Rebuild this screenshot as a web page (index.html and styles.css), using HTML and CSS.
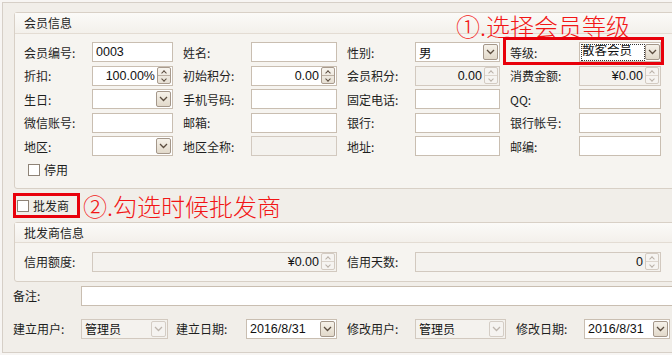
FILE: index.html
```html
<!DOCTYPE html>
<html lang="zh-CN">
<head>
    <meta charset="UTF-8">
    <title>会员资料</title>
    <link rel="stylesheet" href="styles.css">
</head>
<body>
    <div class="window">
        <!-- 会员信息 -->
        <div class="group member">
            <div class="group-head">会员信息</div>
            <div class="member-grid">
                <label class="lbl">会员编号:</label>
                <div class="field"><span class="val">0003</span></div>
                <label class="lbl">姓名:</label>
                <div class="field"></div>
                <label class="lbl">性别:</label>
                <div class="field combo"><span class="val">男</span><span class="drop"><svg width="9" height="6"><polyline points="1,1 4.5,4.5 8,1"/></svg></span></div>
                <label class="lbl">等级:</label>
                <div class="field combo"><span class="val focus">散客会员</span><span class="drop"><svg width="9" height="6"><polyline points="1,1 4.5,4.5 8,1"/></svg></span></div>

                <label class="lbl">折扣:</label>
                <div class="field num"><span class="val">100.00%</span><span class="spin"><i class="up"></i><i class="down"></i></span></div>
                <label class="lbl">初始积分:</label>
                <div class="field num"><span class="val">0.00</span><span class="spin"><i class="up"></i><i class="down"></i></span></div>
                <label class="lbl">会员积分:</label>
                <div class="field num off"><span class="val">0.00</span><span class="spin"><i class="up"></i><i class="down"></i></span></div>
                <label class="lbl">消费金额:</label>
                <div class="field num off"><span class="val">¥0.00</span><span class="spin"><i class="up"></i><i class="down"></i></span></div>

                <label class="lbl">生日:</label>
                <div class="field combo"><span class="val"></span><span class="drop"><svg width="9" height="6"><polyline points="1,1 4.5,4.5 8,1"/></svg></span></div>
                <label class="lbl">手机号码:</label>
                <div class="field"></div>
                <label class="lbl">固定电话:</label>
                <div class="field"></div>
                <label class="lbl">QQ:</label>
                <div class="field"></div>

                <label class="lbl">微信账号:</label>
                <div class="field"></div>
                <label class="lbl">邮箱:</label>
                <div class="field"></div>
                <label class="lbl">银行:</label>
                <div class="field"></div>
                <label class="lbl">银行帐号:</label>
                <div class="field"></div>

                <label class="lbl">地区:</label>
                <div class="field combo"><span class="val"></span><span class="drop"><svg width="9" height="6"><polyline points="1,1 4.5,4.5 8,1"/></svg></span></div>
                <label class="lbl">地区全称:</label>
                <div class="field off"></div>
                <label class="lbl">地址:</label>
                <div class="field"></div>
                <label class="lbl">邮编:</label>
                <div class="field"></div>

                <label class="check stop"><i class="box"></i>停用</label>
            </div>
            <!-- 标注 -->
            <div class="hint hint-grade">①.选择会员等级</div>
            <div class="mark mark-grade"></div>
        </div>

        <div class="dealer-row">
            <label class="check dealer-check"><i class="box"></i>批发商</label>
            <span class="hint">②.勾选时候批发商</span>
        </div>

        <!-- 批发商信息 -->
        <div class="group dealer">
            <div class="group-head">批发商信息</div>
            <div class="dealer-grid">
                <label class="lbl">信用额度:</label>
                <div class="field num off"><span class="val">¥0.00</span><span class="spin"><i class="up"></i><i class="down"></i></span></div>
                <label class="lbl">信用天数:</label>
                <div class="field num off"><span class="val">0</span><span class="spin"><i class="up"></i><i class="down"></i></span></div>
            </div>
        </div>

        <div class="remark-row">
            <label class="lbl">备注:</label>
            <div class="field"></div>
        </div>

        <div class="audit-row">
            <label class="lbl">建立用户:</label>
            <div class="field combo off"><span class="val">管理员</span><span class="drop"><svg width="9" height="6"><polyline points="1,1 4.5,4.5 8,1"/></svg></span></div>
            <label class="lbl">建立日期:</label>
            <div class="field combo"><span class="val">2016/8/31</span><span class="drop"><svg width="9" height="6"><polyline points="1,1 4.5,4.5 8,1"/></svg></span></div>
            <label class="lbl">修改用户:</label>
            <div class="field combo off"><span class="val">管理员</span><span class="drop"><svg width="9" height="6"><polyline points="1,1 4.5,4.5 8,1"/></svg></span></div>
            <label class="lbl">修改日期:</label>
            <div class="field combo"><span class="val">2016/8/31</span><span class="drop"><svg width="9" height="6"><polyline points="1,1 4.5,4.5 8,1"/></svg></span></div>
        </div>
    </div>
</body>
</html>
```

FILE: styles.css
```css
/* 基础 */
* {
    margin: 0;
    padding: 0;
    box-sizing: border-box;
}

body {
    width: 672px;
    height: 355px;
    overflow: hidden;
    background: #f7f5f3;
    padding: 2px 0 0 2px;
    font-family: "Noto Sans CJK SC", "Liberation Sans", sans-serif;
    font-size: 12px;
    color: #1e1e1e;
}

/* 窗体 */
.window {
    height: 351px;
    margin-right: -4px;
    border: 1px solid #d6cfc7;
    border-right: none;
    background: #f1eee9;
    padding: 9px 0 0 11px;
}

/* 分组框 */
.group {
    position: relative;
    margin-right: -6px;
    border: 1px solid #d8d0c6;
    border-radius: 3px;
    background: #f6f4f0;
}

.group-head {
    height: 21px;
    line-height: 20px;
    padding-left: 9px;
    border-bottom: 1px solid #e3dcd3;
    background: linear-gradient(#fbfaf8, #f3f0eb);
}

.dealer .group-head {
    height: 20px;
    line-height: 19px;
}

.lbl {
    display: flex;
    align-items: center;
    white-space: nowrap;
}

/* 会员信息网格 */
.member-grid {
    display: grid;
    grid-template-columns: 68px 81px 78px 86px 78px 85px 79px 82px;
    grid-auto-rows: 20px;
    row-gap: 3.5px;
    padding: 8px 0 8px 9px;
}

.member-grid .lbl:nth-child(8n+3),
.member-grid .lbl:nth-child(8n+5),
.member-grid .lbl:nth-child(8n+7) {
    padding-left: 10px;
}

/* 输入框 */
.field {
    height: 20px;
    display: flex;
    align-items: center;
    border: 1px solid #c9beb1;
    background: #fff;
    padding: 0 1px 0 3px;
    font-family: "Liberation Sans", "Noto Sans CJK SC", sans-serif;
    font-size: 12.5px;
    color: #111;
}

.field.off {
    background: #f4f2ee;
    border-color: #d2c9bf;
}

.field .val {
    flex: 1;
    white-space: nowrap;
    overflow: hidden;
}

.combo .val {
    font-family: "Noto Sans CJK SC", sans-serif;
    font-size: 12px;
}

.combo .val:first-child:not(:empty) {
    font-family: "Liberation Sans", "Noto Sans CJK SC", sans-serif;
    font-size: 12.5px;
}

.audit-row .combo.off .val,
.member .combo .val {
    font-family: "Noto Sans CJK SC", sans-serif;
    font-size: 12px;
}

.val.focus {
    flex: 0 0 auto;
    width: 64px;
    height: 17px;
    line-height: 15px;
    margin-left: -2px;
    padding-left: 1px;
    outline: 1px dotted #333;
    outline-offset: -1px;
}

.num .val {
    text-align: right;
    padding-right: 2px;
}

/* 下拉按钮 */
.drop {
    margin-left: auto;
    width: 15px;
    height: 16px;
    flex: none;
    display: flex;
    align-items: center;
    justify-content: center;
    border: 1px solid #a4978a;
    border-radius: 2px;
    background: linear-gradient(#f6f2ea, #e2d9ca);
}

.drop svg polyline {
    fill: none;
    stroke: #5b4d3f;
    stroke-width: 1.3;
}

.off .drop {
    border-color: #d4cdc5;
    background: #f5f3f0;
}

.off .drop svg polyline {
    stroke: #bdb5ad;
}

/* 数字微调 */
.spin {
    width: 14px;
    height: 17px;
    flex: none;
    display: flex;
    flex-direction: column;
    border: 1px solid #a89b8e;
    border-radius: 2px;
    background: linear-gradient(#f7f4ee, #e6dfd3);
}

.spin i {
    flex: 1;
    position: relative;
}

.spin .up {
    border-bottom: 1px solid #bcb0a3;
}

.spin i::after {
    content: '';
    position: absolute;
    left: 4px;
    width: 3px;
    height: 3px;
    border-left: 1px solid #5b4d3f;
    border-top: 1px solid #5b4d3f;
}

.spin .up::after {
    top: 3px;
    transform: rotate(45deg);
}

.spin .down::after {
    top: 1px;
    transform: rotate(-135deg);
}

.off .spin {
    border-color: #d3cbc2;
    background: #f6f4f1;
}

.off .spin .up {
    border-bottom-color: #ddd6ce;
}

.off .spin i::after {
    border-color: #b9b1a8;
}

/* 复选框 */
.check {
    display: flex;
    align-items: center;
    gap: 4px;
    white-space: nowrap;
}

.box {
    width: 12px;
    height: 12px;
    border: 1px solid #8e8377;
    background: #fff;
}

.stop {
    grid-column: 1 / 3;
    padding-left: 4px;
}

/* 红色标注 */
.hint {
    color: #f21616;
    font-size: 24px;
    line-height: 26px;
    white-space: nowrap;
    font-family: "Noto Sans CJK SC", sans-serif;
    font-weight: 300;
}

.hint-grade {
    position: absolute;
    left: 441px;
    top: 0px;
}

.mark {
    position: absolute;
    border: 3px solid #e8000b;
}

.mark-grade {
    left: 488px;
    top: 24px;
    width: 161px;
    height: 28px;
}

/* 批发商勾选 */
.dealer-row {
    display: flex;
    align-items: center;
    gap: 3px;
    margin: 4px 0 3px -1px;
}

.dealer-check {
    height: 25px;
    border: 3px solid #e8000b;
    padding: 0 8px 0 1px;
}

/* 批发商信息 */
.dealer-grid {
    display: grid;
    grid-template-columns: 68px 245px 78px 246px;
    grid-auto-rows: 20px;
    padding: 9px 0 9px 9px;
}

.dealer-grid .lbl:nth-child(3) {
    padding-left: 10px;
}

/* 备注 */
.remark-row {
    display: grid;
    grid-template-columns: 68px 1fr;
    margin: 4px -6px 0 -1px;
}

/* 建立/修改 */
.audit-row {
    display: grid;
    grid-template-columns: 68px 87px 78px 91px 78px 91px 78px 86px;
    margin: 13px 0 0 -1px;
}

.audit-row .lbl:nth-child(3) {
    padding-left: 8px;
}

.audit-row .lbl:nth-child(5),
.audit-row .lbl:nth-child(7) {
    padding-left: 10px;
}
```
